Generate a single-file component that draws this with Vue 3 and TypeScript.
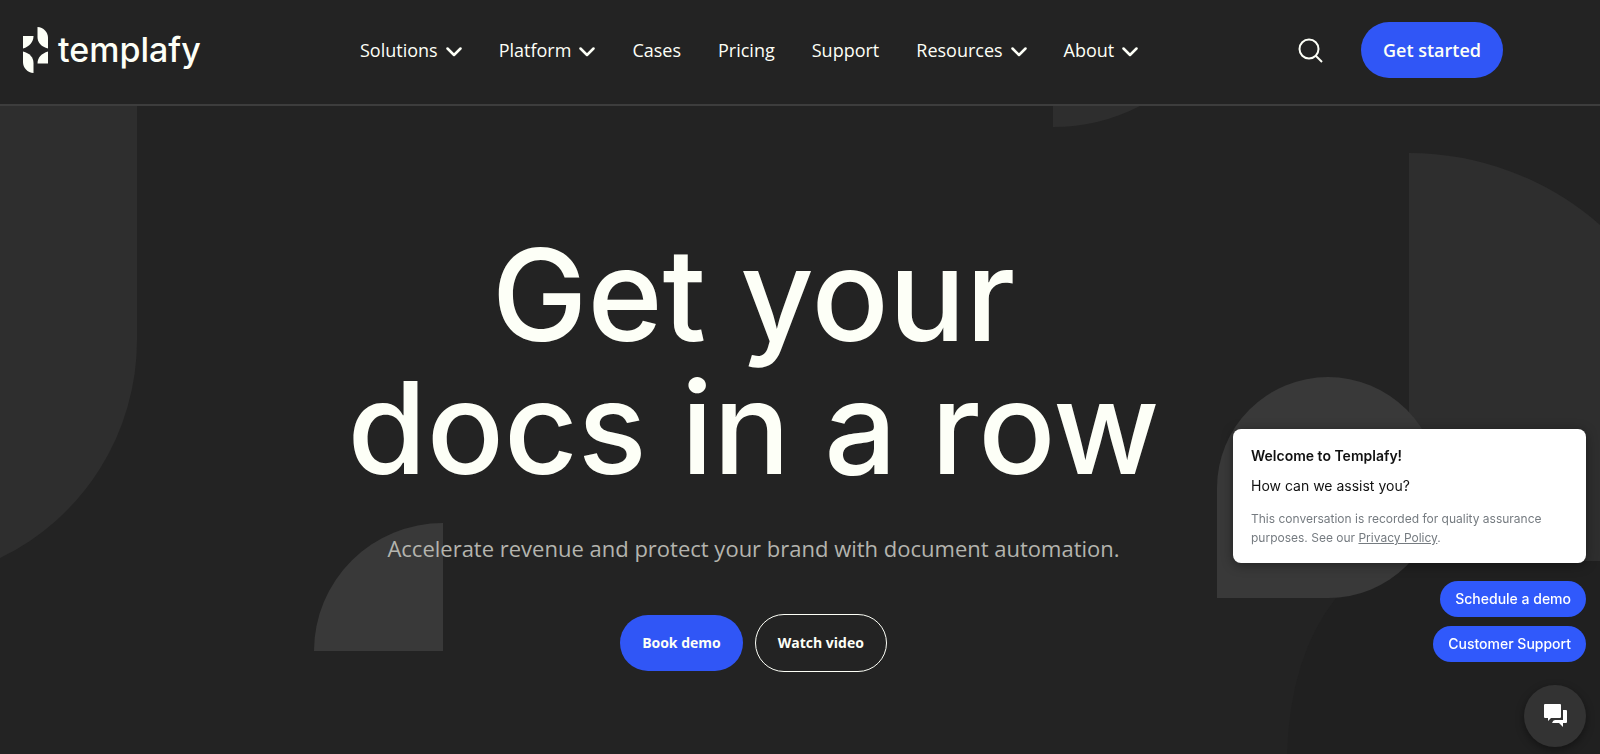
<script setup lang="ts">
interface NavItem {
  label: string
  menu: boolean
}

const navItems: NavItem[] = [
  { label: 'Solutions', menu: true },
  { label: 'Platform', menu: true },
  { label: 'Cases', menu: false },
  { label: 'Pricing', menu: false },
  { label: 'Support', menu: false },
  { label: 'Resources', menu: true },
  { label: 'About', menu: true },
]

const replies: string[] = ['Schedule a demo', 'Customer Support']
</script>

<template>
  <div class="page">
    <header class="header">
      <a class="logo" href="#" aria-label="templafy">
        <svg class="logo-mark" viewBox="0 0 25 46" width="25" height="46" aria-hidden="true">
          <path d="M14.500 0C20.500 0.500 25 5 25 11V21.500C18.500 20 14.500 15.500 14.500 10Z" />
          <path d="M0 9H10.500C10.500 15 6.500 19.500 0 21.500Z" />
          <path d="M10.500 46C4.500 45.500 0 41 0 35V24.500C6.500 26 10.500 30.500 10.500 36Z" />
          <path d="M25 36.500H14.500C14.500 30.500 18.500 26.500 25 24.500Z" />
        </svg>
        <span class="logo-text">templafy</span>
      </a>
      <nav class="nav" aria-label="Main">
        <a v-for="item in navItems" :key="item.label" class="nav-link" href="#">
          <span>{{ item.label }}</span>
          <svg v-if="item.menu" class="chevron" viewBox="0 0 16 10" width="16" height="10" aria-hidden="true">
            <path d="M1.500 1.500L8 8L14.500 1.500" />
          </svg>
        </a>
      </nav>
      <div class="actions">
        <button class="search" type="button" aria-label="Search">
          <svg viewBox="0 0 25 25" width="25" height="25" aria-hidden="true">
            <circle cx="11" cy="11" r="9.500" />
            <path d="M17.500 17.500L24 24" />
          </svg>
        </button>
        <button class="pill cta" type="button">Get started</button>
      </div>
    </header>

    <main class="hero">
      <svg class="shapes" viewBox="0 0 1600 648" preserveAspectRatio="xMidYMin slice" aria-hidden="true">
        <path class="tone-a" d="M0 0H137V234A242 242 0 0 1 0 452Z" />
        <path class="tone-a" d="M1053 0H1140A190 190 0 0 1 1053 21Z" />
        <path class="tone-a" d="M1409 47A290 290 0 0 1 1600 119V455H1409Z" />
        <path class="tone-c" d="M1287 648Q1290 550 1336 492L1410 455H1600V648Z" />
        <path class="tone-b" d="M1217 492V382A111 111 0 0 1 1328 271A111 111 0 0 1 1439 382A111 110 0 0 1 1328 492Z" />
        <path class="tone-b" d="M314 545A129 128 0 0 1 443 417V545Z" />
      </svg>
      <div class="hero-copy">
        <h1>Get your<br />docs in a row</h1>
        <p class="lead">Accelerate revenue and protect your brand with document automation.</p>
        <div class="hero-buttons">
          <button class="pill" type="button">Book demo</button>
          <button class="pill outline" type="button">Watch video</button>
        </div>
      </div>
    </main>

    <aside class="chat" aria-label="Chat">
      <section class="chat-card">
        <p class="chat-title">Welcome to Templafy!</p>
        <p class="chat-question">How can we assist you?</p>
        <p class="chat-note">
          This conversation is recorded for quality assurance purposes. See our
          <a href="#">Privacy Policy</a>.
        </p>
      </section>
      <div class="replies">
        <button v-for="reply in replies" :key="reply" class="reply" type="button">{{ reply }}</button>
      </div>
      <button class="chat-toggle" type="button" aria-label="Toggle chat">
        <svg viewBox="0 0 24 24" width="24" height="24" aria-hidden="true">
          <path d="M2 0H17Q18 0 18 1V13Q18 14 17 14H8L5 17V14H2Q1 14 1 13V1Q1 0 2 0Z" />
          <path d="M20 6H23Q24 6 24 7V18Q24 19 23 19H20V23L16 19H9Q10 16 12 16H20Z" />
        </svg>
      </button>
    </aside>
  </div>
</template>

<style>
body {
  background: #232323;
}
</style>

<style scoped>
.page {
  display: flex;
  flex-direction: column;
  min-height: 100vh;
  color: #fdfff7;
  font-family: "Open Sans", "Noto Sans", sans-serif;
}

.header {
  display: grid;
  grid-template-columns: 360px 1fr auto;
  align-items: center;
  padding: 22px 97px 26px 0;
  border-bottom: 2px solid #3d3d3d;
}

.logo {
  display: flex;
  align-items: center;
  gap: 10px;
  padding-left: 23px;
  color: inherit;
  text-decoration: none;
}

.logo-mark {
  fill: #fdfff7;
}

.logo-text {
  font: 500 34px/44px Inter, sans-serif;
}

.nav {
  display: flex;
  gap: 37px;
}

.nav-link {
  display: flex;
  align-items: center;
  gap: 8px;
  color: inherit;
  font-size: 18px;
  line-height: 24px;
  text-decoration: none;
}

.chevron {
  margin-top: 4px;
  fill: none;
  stroke: currentColor;
  stroke-width: 2.500;
  stroke-linecap: round;
  stroke-linejoin: round;
}

.actions {
  display: flex;
  align-items: center;
  gap: 38px;
}

.search {
  display: flex;
  padding: 0;
  border: 0;
  background: none;
  color: inherit;
}

.search svg {
  fill: none;
  stroke: currentColor;
  stroke-width: 2;
}

.pill {
  height: 56px;
  padding: 0 22px;
  border: 0;
  border-radius: 28px;
  background: #3056f6;
  color: #fdfff7;
  font: 700 14px/24px "Open Sans", "Noto Sans", sans-serif;
}

.cta {
  font-size: 18px;
  font-weight: 600;
}

.outline {
  height: 58px;
  border: 1px solid #fdfff7;
  border-radius: 29px;
  background: none;
}

.hero {
  position: relative;
  flex: 1;
  padding: 122px 93px 80px 0;
  overflow: hidden;
}

.shapes {
  position: absolute;
  top: 0;
  left: 0;
  width: 100%;
  height: 100%;
}

.tone-a {
  fill: #2e2e2e;
}

.tone-b {
  fill: #393939;
}

.tone-c {
  fill: #202020;
}

.hero-copy {
  position: relative;
  display: flex;
  flex-direction: column;
  align-items: center;
}

h1 {
  margin: 0;
  font: 500 128px/133px Inter, sans-serif;
  text-align: center;
}

.lead {
  margin: 36px 0 0;
  color: #b4b4ae;
  font-size: 22px;
  line-height: 36px;
}

.hero-buttons {
  display: flex;
  align-items: center;
  gap: 12px;
  margin-top: 48px;
}

.chat {
  position: fixed;
  right: 14px;
  bottom: 7px;
  display: flex;
  flex-direction: column;
  align-items: flex-end;
  width: 353px;
  font-family: Inter, sans-serif;
}

.chat-card {
  box-sizing: border-box;
  width: 100%;
  padding: 16px 36px 16px 18px;
  border-radius: 8px;
  background: #fff;
  box-shadow: 0 2px 12px #0006;
  color: #111;
}

.chat-card p {
  margin: 0;
}

.chat-card .chat-title {
  font-size: 14px;
  font-weight: 600;
  line-height: 22px;
}

.chat-card .chat-question {
  margin-top: 8px;
  font-size: 14px;
  line-height: 22px;
}

.chat-card .chat-note {
  margin-top: 12px;
  color: #757b80;
  font-size: 12px;
  line-height: 19px;
}

.chat-note a {
  color: inherit;
}

.replies {
  display: flex;
  flex-direction: column;
  align-items: flex-end;
  gap: 9px;
  margin-top: 18px;
}

.reply {
  height: 36px;
  padding: 0 15px;
  border: 0;
  border-radius: 18px;
  background: #3059fb;
  color: #fff;
  font: 500 14px/20px Inter, sans-serif;
}

.chat-toggle {
  display: flex;
  align-items: center;
  justify-content: center;
  width: 62px;
  height: 62px;
  margin-top: 23px;
  padding: 0;
  border: 0;
  border-radius: 50%;
  background: #333;
  box-shadow: 0 3px 8px #0006;
}

.chat-toggle svg {
  fill: #fff;
}
</style>
